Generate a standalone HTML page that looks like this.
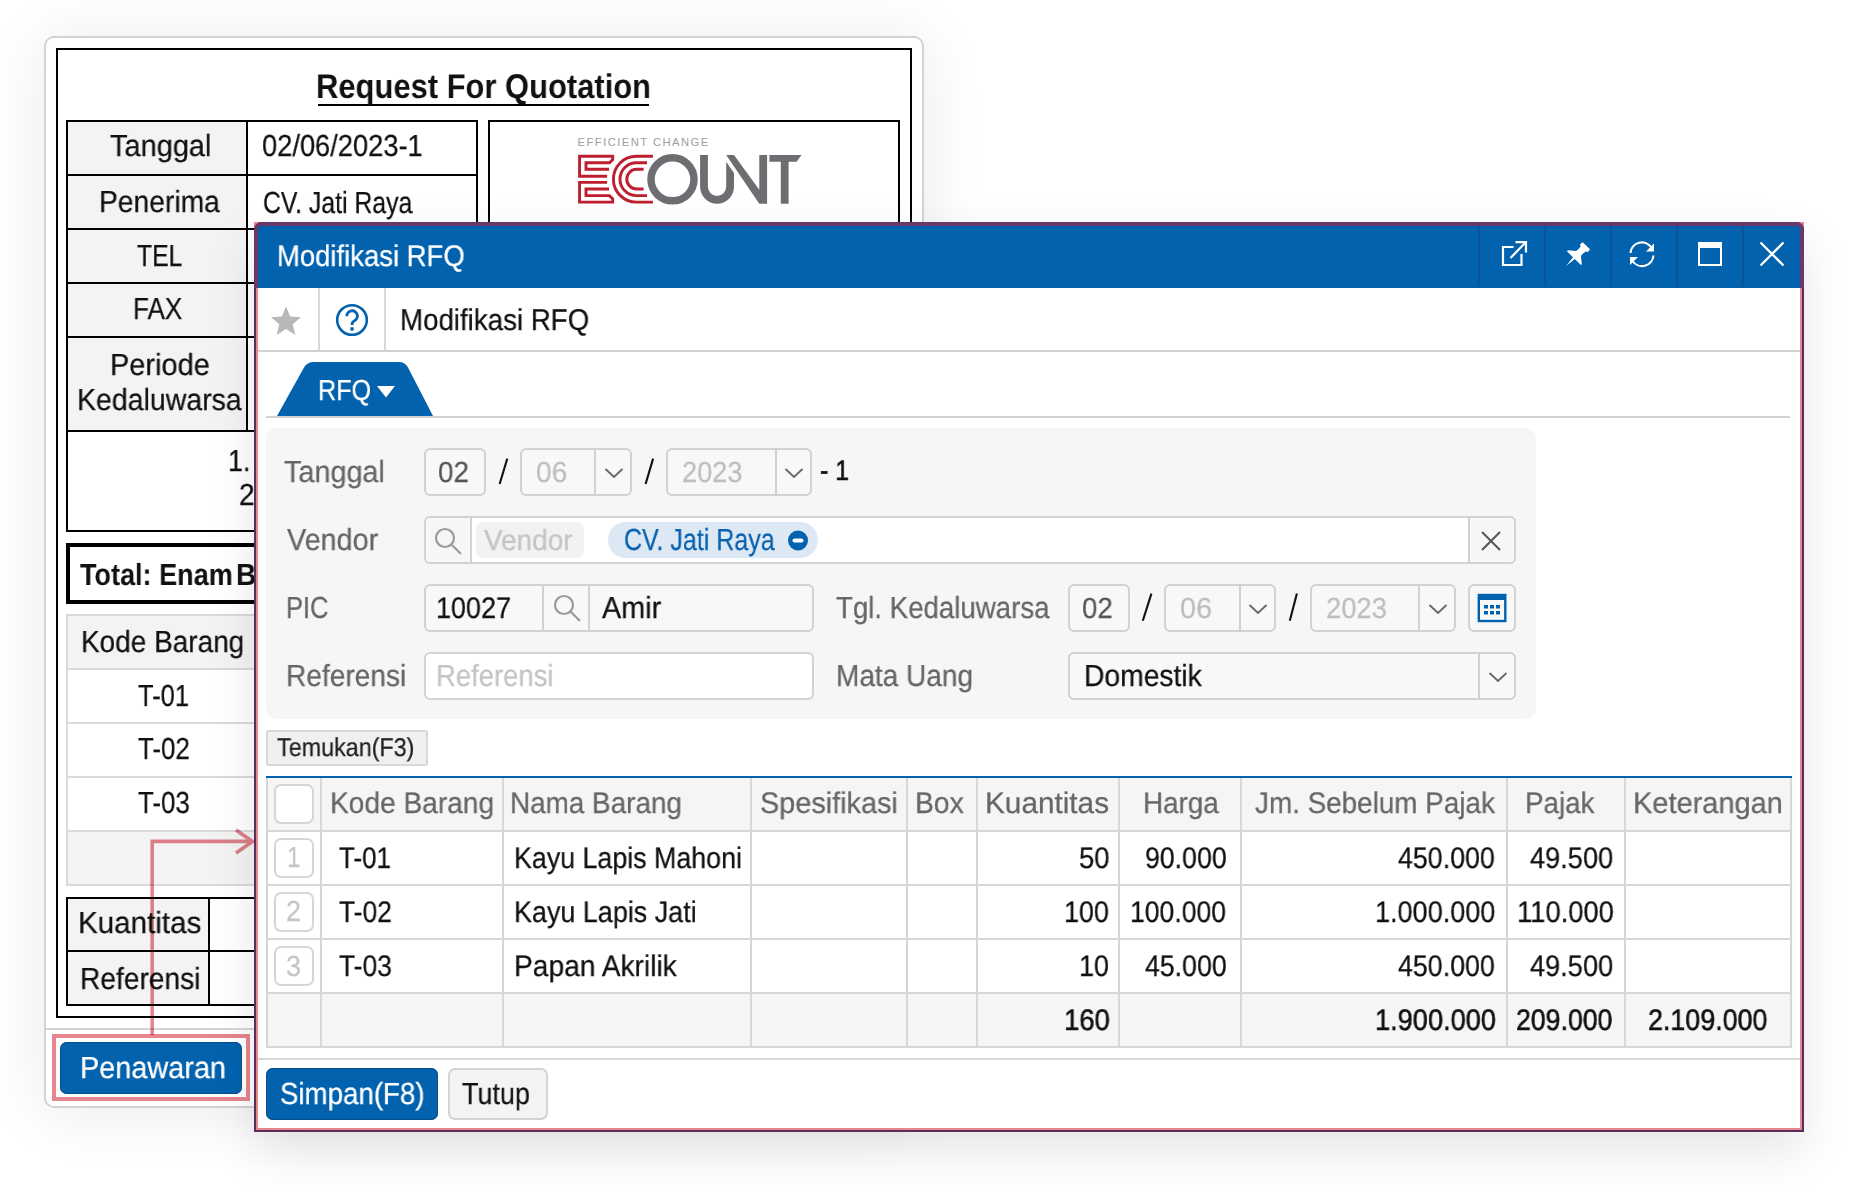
<!DOCTYPE html>
<html><head><meta charset="utf-8">
<style>
*{box-sizing:border-box;margin:0;padding:0}
html,body{width:1854px;height:1190px;overflow:hidden;background:#fff;font-family:"Liberation Sans",sans-serif;position:relative}
.a{position:absolute}
.t{position:absolute;white-space:nowrap;line-height:1;transform-origin:0 0;text-rendering:geometricPrecision;will-change:transform}
</style></head><body>
<div class="a" style="left:44px;top:36px;width:880px;height:1072px;border:2px solid #d3d3d3;border-radius:10px;background:#fff;box-shadow:0 4px 64px rgba(0,0,0,0.085)"></div>
<div class="a" style="left:46px;top:1028px;width:876px;height:2px;background:#d5d5d5"></div>
<div class="a" style="left:56px;top:48px;width:856px;height:970px;border:2px solid #000"></div>
<div class="a" style="left:318px;top:104px;width:331px;height:2px;background:#000"></div>
<div class="a" style="left:68px;top:122px;width:178px;height:308px;background:#f3f3f3"></div>
<div class="a" style="left:66px;top:120px;width:412px;height:312px;border:2px solid #000"></div>
<div class="a" style="left:246px;top:120px;width:2px;height:312px;background:#000"></div>
<div class="a" style="left:66px;top:174px;width:412px;height:2px;background:#000"></div>
<div class="a" style="left:66px;top:228px;width:412px;height:2px;background:#000"></div>
<div class="a" style="left:66px;top:282px;width:412px;height:2px;background:#000"></div>
<div class="a" style="left:66px;top:336px;width:412px;height:2px;background:#000"></div>
<div class="a" style="left:488px;top:120px;width:412px;height:312px;border:2px solid #000"></div>
<div class="a" style="left:66px;top:430px;width:834px;height:102px;border:2px solid #000"></div>
<div class="a" style="left:66px;top:543px;width:834px;height:61px;border:4px solid #000"></div>
<div class="a" style="left:68px;top:616px;width:830px;height:52px;background:#f3f3f3"></div>
<div class="a" style="left:68px;top:832px;width:830px;height:52px;background:#f3f3f3"></div>
<div class="a" style="left:66px;top:614px;width:834px;height:272px;border:2px solid #dadada"></div>
<div class="a" style="left:66px;top:668px;width:834px;height:2px;background:#dadada"></div>
<div class="a" style="left:66px;top:722px;width:834px;height:2px;background:#dadada"></div>
<div class="a" style="left:66px;top:776px;width:834px;height:2px;background:#dadada"></div>
<div class="a" style="left:66px;top:830px;width:834px;height:2px;background:#dadada"></div>
<div class="a" style="left:68px;top:899px;width:140px;height:105px;background:#f3f3f3"></div>
<div class="a" style="left:66px;top:897px;width:834px;height:109px;border:2px solid #000"></div>
<div class="a" style="left:208px;top:897px;width:2px;height:109px;background:#000"></div>
<div class="a" style="left:66px;top:950px;width:834px;height:2px;background:#000"></div>
<div class="a" style="left:52px;top:1034px;width:198px;height:67px;border:4px solid #e5858e"></div>
<div class="a" style="left:60px;top:1042px;width:182px;height:52px;background:#0262ae;border-radius:7px;box-shadow:inset 0 0 0 1px #0a4f8c"></div>
<svg class="a" style="left:560px;top:125px" width="260" height="90" viewBox="0 0 260 90">
<text x="17.6" y="21" font-family="Liberation Sans" font-size="11.2" fill="#9d9d9d" textLength="130.6" lengthAdjust="spacing">EFFICIENT CHANGE</text>
<g fill="none" stroke="#be1e2d" stroke-width="2.9" stroke-linejoin="miter">
<path d="M47.1 51.3 H19.55 V31.3 H52.7 V34.6 L49.5 37.7 H26 V44.3 H49"/>
<path d="M47.1 57.4 H19.55 V77.1 H52.7 V73.8 L49.5 70.6 H26 V64 H49"/>
<path d="M92.9 31.3 H76.3 A22.9 22.9 0 0 0 76.3 77.1 H92.9"/>
<path d="M87 37.7 H76.45 A16.45 16.45 0 0 0 76.45 70.6 H87"/>
<path d="M83.6 44.3 H76.65 A9.85 9.85 0 0 0 76.65 64 H83.6"/>
</g>
<circle cx="112.5" cy="54.35" r="21.5" fill="none" stroke="#6d6e71" stroke-width="7.5"/>
<path d="M140.1 29.9 H147.9 V61.85 A9.15 9.15 0 0 0 166.2 61.85 V36.8 L174 48 V61.85 A16.95 16.95 0 0 1 140.1 61.85 Z" fill="#6d6e71"/>
<path d="M166.2 29.9 H174 L199.3 64.7 V29.9 H207.1 V78.8 H199.3 Z" fill="#6d6e71"/>
<path d="M209.4 29.9 H241.5 L236.5 36.8 H228.6 V78.8 H220.8 V36.8 H209.4 Z" fill="#6d6e71"/>
</svg>
<div class="t" id="title" style="left:315.8px;top:70.0px;font-size:34.25px;font-weight:700;color:#111;transform:scaleX(0.9030);">Request For Quotation</div>
<div class="t" id="d_tg" style="left:109.8px;top:131.0px;font-size:30.5px;font-weight:400;color:#111;transform:scaleX(0.9490);-webkit-text-stroke:0.25px #111;">Tanggal</div>
<div class="t" id="d_tgv" style="left:262.1px;top:131.0px;font-size:30.5px;font-weight:400;color:#111;transform:scaleX(0.8938);-webkit-text-stroke:0.25px #111;">02/06/2023-1</div>
<div class="t" id="d_pen" style="left:98.6px;top:187.0px;font-size:30.5px;font-weight:400;color:#111;transform:scaleX(0.9256);-webkit-text-stroke:0.25px #111;">Penerima</div>
<div class="t" id="d_penv" style="left:262.8px;top:188.0px;font-size:30.5px;font-weight:400;color:#111;transform:scaleX(0.8126);-webkit-text-stroke:0.25px #111;">CV. Jati Raya</div>
<div class="t" id="d_tel" style="left:137.0px;top:241.0px;font-size:30.5px;font-weight:400;color:#111;transform:scaleX(0.8093);-webkit-text-stroke:0.25px #111;">TEL</div>
<div class="t" id="d_fax" style="left:133.3px;top:294.0px;font-size:30.5px;font-weight:400;color:#111;transform:scaleX(0.8545);-webkit-text-stroke:0.25px #111;">FAX</div>
<div class="t" id="d_per" style="left:110.1px;top:350.0px;font-size:30.5px;font-weight:400;color:#111;transform:scaleX(0.9490);-webkit-text-stroke:0.25px #111;">Periode</div>
<div class="t" id="d_ked" style="left:77.1px;top:385.0px;font-size:30.5px;font-weight:400;color:#111;transform:scaleX(0.9345);-webkit-text-stroke:0.25px #111;">Kedaluwarsa</div>
<div class="t" id="d_r1" style="left:227.7px;top:446.0px;font-size:30.5px;font-weight:400;color:#111;transform:scaleX(0.8810);-webkit-text-stroke:0.25px #111;">1.</div>
<div class="t" id="d_r2" style="left:239.1px;top:480.0px;font-size:30.5px;font-weight:400;color:#111;transform:scaleX(0.9200);-webkit-text-stroke:0.25px #111;">2.</div>
<div class="t" id="d_tot" style="left:79.8px;top:560.0px;font-size:30.5px;font-weight:700;color:#111;transform:scaleX(0.8865);">Total: Enam</div>
<div class="t" id="d_tot2" style="left:235.8px;top:560.0px;font-size:30.5px;font-weight:700;color:#111;transform:scaleX(0.9200);">Belas</div>
<div class="t" id="d_kb" style="left:80.7px;top:627.0px;font-size:30.5px;font-weight:400;color:#111;transform:scaleX(0.9167);-webkit-text-stroke:0.25px #111;">Kode Barang</div>
<div class="t" id="d_t1" style="left:138.2px;top:681.0px;font-size:30.5px;font-weight:400;color:#111;transform:scaleX(0.8373);-webkit-text-stroke:0.25px #111;">T-01</div>
<div class="t" id="d_t2" style="left:138.1px;top:734.0px;font-size:30.5px;font-weight:400;color:#111;transform:scaleX(0.8508);-webkit-text-stroke:0.25px #111;">T-02</div>
<div class="t" id="d_t3" style="left:138.1px;top:788.0px;font-size:30.5px;font-weight:400;color:#111;transform:scaleX(0.8508);-webkit-text-stroke:0.25px #111;">T-03</div>
<div class="t" id="d_kua" style="left:77.9px;top:908.0px;font-size:30.5px;font-weight:400;color:#111;transform:scaleX(0.9694);-webkit-text-stroke:0.25px #111;">Kuantitas</div>
<div class="t" id="d_ref" style="left:79.8px;top:964.0px;font-size:30.5px;font-weight:400;color:#111;transform:scaleX(0.9228);-webkit-text-stroke:0.25px #111;">Referensi</div>
<div class="t" id="d_pwr" style="left:79.7px;top:1053.0px;font-size:30.5px;font-weight:400;color:#fff;transform:scaleX(0.9460);-webkit-text-stroke:0.25px #fff;">Penawaran</div>
<svg class="a" style="left:0;top:0;mix-blend-mode:multiply" width="300" height="1100"><path d="M152.2 1035 V841.4 H252" fill="none" stroke="#e5858e" stroke-width="3.6"/><polyline points="236,830 252.5,841.4 236,853" fill="none" stroke="#e5858e" stroke-width="3.6"/></svg>
<div class="a" style="left:254px;top:222px;width:1550px;height:910px;background:#e8868e;box-shadow:0 20px 46px rgba(0,0,0,0.10)"></div>
<div class="a" style="left:254px;top:222px;width:1550px;height:910px;border:2px solid #5a2d5e;border-radius:8px 8px 0 0;background:#fff;box-shadow:inset 0 0 0 2px #e8868e"></div>
<div class="a" style="left:254px;top:222px;width:1550px;height:66px;border:4px solid #683868;border-bottom:0;border-radius:8px 8px 0 0;background:#0262ae"></div>
<div class="a" style="left:1478px;top:226px;width:2px;height:60px;background:#0a5394"></div>
<div class="a" style="left:1544px;top:226px;width:2px;height:60px;background:#0a5394"></div>
<div class="a" style="left:1610px;top:226px;width:2px;height:60px;background:#0a5394"></div>
<div class="a" style="left:1676px;top:226px;width:2px;height:60px;background:#0a5394"></div>
<div class="a" style="left:1742px;top:226px;width:2px;height:60px;background:#0a5394"></div>
<svg class="a" style="left:1495px;top:235px" width="40" height="40" viewBox="0 0 40 40" fill="none" stroke="#fff" stroke-width="2.2">
<path d="M18.5 12 H8 V30 H26.5 V19"/><path d="M15.5 23 L30.5 7.5"/><path d="M20.5 7.2 H31 V17.5"/></svg>
<svg class="a" style="left:1560px;top:235px" width="40" height="40" viewBox="0 0 40 40">
<g transform="translate(26.35 10.75) rotate(45)" fill="#fff"><path d="M-5.4,1 Q-5.4,0 -4.4,0 H4.4 Q5.4,0 5.4,1 V3.2 Q5.4,4.2 4.4,4.2 H3.6 Q3,8 3.4,11 L9.8,16.2 V17.6 H1.3 L0,28.8 L-1.3,17.6 H-9.8 V16.2 L-3.4,11 Q-3,8 -3.6,4.2 H-4.4 Q-5.4,4.2 -5.4,3.2 Z"/></g></svg>
<svg class="a" style="left:1622px;top:234px" width="40" height="40" viewBox="0 0 40 40" fill="none" stroke="#fff" stroke-width="2.2">
<path d="M8.5 19 A11.5 11.5 0 0 1 29.5 13.5"/><path d="M31.5 21.5 A11.5 11.5 0 0 1 10.5 27"/>
<path d="M32 9.5 V17.5 H24 Z" fill="#fff" stroke="none"/><path d="M8 31 V23 H16 Z" fill="#fff" stroke="none"/></svg>
<div class="a" style="left:1698px;top:242px;width:24px;height:24px;border:2px solid #fff;border-top:6px solid #fff"></div>
<svg class="a" style="left:1752px;top:234px" width="40" height="40" viewBox="0 0 40 40" stroke="#fff" stroke-width="2.3">
<path d="M8.5 8.5 L31.5 31.5 M31.5 8.5 L8.5 31.5"/></svg>
<div class="a" style="left:258px;top:350px;width:1542px;height:2px;background:#d2d2d2"></div>
<div class="a" style="left:318px;top:288px;width:2px;height:62px;background:#d8d8d8"></div>
<div class="a" style="left:384px;top:288px;width:2px;height:62px;background:#d8d8d8"></div>
<svg class="a" style="left:266px;top:301px" width="40" height="40" viewBox="0 0 40 40">
<path d="M20 5.5 L24.2 15.6 L35 16.3 L26.7 23.2 L29.4 34 L20 28 L10.6 34 L13.3 23.2 L5 16.3 L15.8 15.6 Z" fill="#b8b8b8"/></svg>
<svg class="a" style="left:332px;top:300px" width="40" height="40" viewBox="0 0 40 40">
<circle cx="20" cy="20" r="14.8" fill="none" stroke="#0262ae" stroke-width="2.6"/>
<path d="M14.8 16.2 A5.3 5.3 0 1 1 22 21 C20.3 22 20 22.8 20 25" fill="none" stroke="#0262ae" stroke-width="2.8"/>
<rect x="18.4" y="27.3" width="3.3" height="3.3" fill="#0262ae"/></svg>
<div class="a" style="left:266px;top:416px;width:1524px;height:2px;background:#d2d2d2"></div>
<svg class="a" style="left:270px;top:358px" width="170" height="60" viewBox="0 0 170 60">
<path d="M7 58 L34 9.5 Q37 4 44 4 L129 4 Q135 4 138 9.5 L163 58 Z" fill="#0262ae"/>
<path d="M107 28 H125 L116 39.5 Z" fill="#fff"/></svg>
<div class="a" style="left:266px;top:428px;width:1270px;height:291px;background:#f6f6f6;border-radius:10px"></div>
<div class="a" style="left:424px;top:448px;width:62px;height:48px;border:2px solid #d2d2d2;border-radius:6px;background:#f8f8f8"></div>
<div class="a" style="left:520px;top:448px;width:112px;height:48px;border:2px solid #d2d2d2;border-radius:6px;background:#f8f8f8"></div><div class="a" style="left:594px;top:448px;width:2px;height:48px;background:#d2d2d2"></div><svg class="a" style="left:603px;top:466px" width="22" height="14" viewBox="0 0 22 14"><path d="M2.5 3 L11 11 L19.5 3" fill="none" stroke="#666" stroke-width="1.8"/></svg>
<div class="a" style="left:666px;top:448px;width:146px;height:48px;border:2px solid #d2d2d2;border-radius:6px;background:#f8f8f8"></div><div class="a" style="left:775px;top:448px;width:2px;height:48px;background:#d2d2d2"></div><svg class="a" style="left:783px;top:466px" width="22" height="14" viewBox="0 0 22 14"><path d="M2.5 3 L11 11 L19.5 3" fill="none" stroke="#666" stroke-width="1.8"/></svg>
<div class="a" style="left:424px;top:516px;width:1092px;height:48px;border:2px solid #d2d2d2;border-radius:6px;background:#fff"></div>
<div class="a" style="left:426px;top:518px;width:45px;height:44px;background:#f6f6f6;border-radius:4px 0 0 4px"></div>
<div class="a" style="left:470px;top:516px;width:2px;height:48px;background:#d2d2d2"></div>
<div class="a" style="left:1470px;top:518px;width:44px;height:44px;background:#f6f6f6;border-radius:0 4px 4px 0"></div>
<div class="a" style="left:1468px;top:516px;width:2px;height:48px;background:#d2d2d2"></div>
<div class="a" style="left:476px;top:522px;width:108px;height:36px;background:#f2f2f2;border-radius:7px"></div>
<div class="a" style="left:608px;top:522px;width:210px;height:36px;background:#dce8f4;border-radius:18px"></div>
<svg class="a" style="left:786px;top:529px" width="24" height="24" viewBox="0 0 24 24"><circle cx="12" cy="11.5" r="10" fill="#0262ae"/><rect x="6.5" y="9.6" width="11" height="4" rx="2" fill="#fff"/></svg>
<svg class="a" style="left:432px;top:525px" width="32" height="32" viewBox="0 0 32 32" fill="none" stroke="#9b9b9b" stroke-width="2.2"><circle cx="13" cy="13" r="9"/><path d="M19.5 19.5 L29 29"/></svg>
<svg class="a" style="left:1478px;top:528px" width="26" height="26" viewBox="0 0 26 26" stroke="#555" stroke-width="2"><path d="M4 4 L22 22 M22 4 L4 22"/></svg>
<div class="a" style="left:424px;top:584px;width:390px;height:48px;border:2px solid #d2d2d2;border-radius:6px;background:#f8f8f8"></div>
<div class="a" style="left:542px;top:584px;width:2px;height:48px;background:#d2d2d2"></div>
<div class="a" style="left:588px;top:584px;width:2px;height:48px;background:#d2d2d2"></div>
<svg class="a" style="left:551px;top:592px" width="32" height="32" viewBox="0 0 32 32" fill="none" stroke="#9b9b9b" stroke-width="2.2"><circle cx="13" cy="13" r="9"/><path d="M19.5 19.5 L29 29"/></svg>
<div class="a" style="left:1068px;top:584px;width:62px;height:48px;border:2px solid #d2d2d2;border-radius:6px;background:#f8f8f8"></div>
<div class="a" style="left:1164px;top:584px;width:112px;height:48px;border:2px solid #d2d2d2;border-radius:6px;background:#f8f8f8"></div><div class="a" style="left:1239px;top:584px;width:2px;height:48px;background:#d2d2d2"></div><svg class="a" style="left:1247px;top:602px" width="22" height="14" viewBox="0 0 22 14"><path d="M2.5 3 L11 11 L19.5 3" fill="none" stroke="#666" stroke-width="1.8"/></svg>
<div class="a" style="left:1310px;top:584px;width:146px;height:48px;border:2px solid #d2d2d2;border-radius:6px;background:#f8f8f8"></div><div class="a" style="left:1418px;top:584px;width:2px;height:48px;background:#d2d2d2"></div><svg class="a" style="left:1427px;top:602px" width="22" height="14" viewBox="0 0 22 14"><path d="M2.5 3 L11 11 L19.5 3" fill="none" stroke="#666" stroke-width="1.8"/></svg>
<div class="a" style="left:1468px;top:584px;width:48px;height:48px;border:2px solid #d2d2d2;border-radius:6px;background:#f8f8f8"></div>
<svg class="a" style="left:1476px;top:592px" width="32" height="32" viewBox="0 0 32 32">
<rect x="2.8" y="3" width="26.5" height="26" fill="none" stroke="#0262ae" stroke-width="2.4"/><rect x="2" y="2" width="28" height="6" fill="#0262ae"/>
<g fill="#0262ae"><rect x="8" y="13" width="4" height="3.5"/><rect x="14" y="13" width="4" height="3.5"/><rect x="20" y="13" width="4" height="3.5"/>
<rect x="8" y="19" width="4" height="3.5"/><rect x="14" y="19" width="4" height="3.5"/><rect x="20" y="19" width="4" height="3.5"/></g></svg>
<svg class="a" style="left:0;top:0" width="1854" height="1190"><path d="M507.3 458.6 L499.6 484" stroke="#111" stroke-width="2.1" stroke-linecap="butt"/></svg>
<svg class="a" style="left:0;top:0" width="1854" height="1190"><path d="M653.1 458.6 L645.6 484" stroke="#111" stroke-width="2.1" stroke-linecap="butt"/></svg>
<svg class="a" style="left:0;top:0" width="1854" height="1190"><path d="M1151.4 593.6 L1142.8 620.8" stroke="#111" stroke-width="2.1" stroke-linecap="butt"/></svg>
<svg class="a" style="left:0;top:0" width="1854" height="1190"><path d="M1296.9 593.6 L1289.8 620.8" stroke="#111" stroke-width="2.1" stroke-linecap="butt"/></svg>
<div class="a" style="left:424px;top:652px;width:390px;height:48px;border:2px solid #d2d2d2;border-radius:6px;background:#fff"></div>
<div class="a" style="left:1068px;top:652px;width:448px;height:48px;border:2px solid #d2d2d2;border-radius:6px;background:#f8f8f8"></div><div class="a" style="left:1478px;top:652px;width:2px;height:48px;background:#d2d2d2"></div><svg class="a" style="left:1487px;top:670px" width="22" height="14" viewBox="0 0 22 14"><path d="M2.5 3 L11 11 L19.5 3" fill="none" stroke="#666" stroke-width="1.8"/></svg>
<div class="a" style="left:266px;top:730px;width:162px;height:36px;background:#f0f0f0;border:2px solid #d8d8d8;border-radius:2px"></div>
<div class="a" style="left:266px;top:778px;width:1526px;height:52px;background:#f5f5f5"></div>
<div class="a" style="left:266px;top:992px;width:1526px;height:56px;background:#f5f5f5"></div>
<div class="a" style="left:266px;top:776px;width:1526px;height:2px;background:#0262ae"></div>
<div class="a" style="left:266px;top:830px;width:1526px;height:2px;background:#d6d6d6"></div>
<div class="a" style="left:266px;top:884px;width:1526px;height:2px;background:#d6d6d6"></div>
<div class="a" style="left:266px;top:938px;width:1526px;height:2px;background:#d6d6d6"></div>
<div class="a" style="left:266px;top:992px;width:1526px;height:2px;background:#d6d6d6"></div>
<div class="a" style="left:266px;top:1046px;width:1526px;height:2px;background:#d6d6d6"></div>
<div class="a" style="left:266px;top:778px;width:2px;height:270px;background:#d6d6d6"></div>
<div class="a" style="left:320px;top:778px;width:2px;height:270px;background:#d6d6d6"></div>
<div class="a" style="left:502px;top:778px;width:2px;height:270px;background:#d6d6d6"></div>
<div class="a" style="left:750px;top:778px;width:2px;height:270px;background:#d6d6d6"></div>
<div class="a" style="left:906px;top:778px;width:2px;height:270px;background:#d6d6d6"></div>
<div class="a" style="left:976px;top:778px;width:2px;height:270px;background:#d6d6d6"></div>
<div class="a" style="left:1118px;top:778px;width:2px;height:270px;background:#d6d6d6"></div>
<div class="a" style="left:1240px;top:778px;width:2px;height:270px;background:#d6d6d6"></div>
<div class="a" style="left:1506px;top:778px;width:2px;height:270px;background:#d6d6d6"></div>
<div class="a" style="left:1624px;top:778px;width:2px;height:270px;background:#d6d6d6"></div>
<div class="a" style="left:1790px;top:778px;width:2px;height:270px;background:#d6d6d6"></div>
<div class="a" style="left:274px;top:784px;width:40px;height:40px;border:2px solid #d6d6d6;border-radius:7px;background:#fff"></div>
<div class="a" style="left:274px;top:838px;width:40px;height:40px;border:2px solid #d6d6d6;border-radius:7px;background:#fff"></div>
<div class="a" style="left:274px;top:892px;width:40px;height:40px;border:2px solid #d6d6d6;border-radius:7px;background:#fff"></div>
<div class="a" style="left:274px;top:946px;width:40px;height:40px;border:2px solid #d6d6d6;border-radius:7px;background:#fff"></div>
<div class="a" style="left:258px;top:1058px;width:1542px;height:2px;background:#d8d8d8"></div>
<div class="a" style="left:266px;top:1068px;width:172px;height:52px;background:#0262ae;border-radius:7px;box-shadow:inset 0 0 0 1px #0a4f8c"></div>
<div class="a" style="left:448px;top:1068px;width:100px;height:52px;background:#f3f3f3;border:2px solid #d3d3d3;border-radius:7px"></div>
<div class="t" id="m_hdr" style="left:276.6px;top:242.0px;font-size:29.75px;font-weight:400;color:#fff;transform:scaleX(0.9230);-webkit-text-stroke:0.25px #fff;">Modifikasi RFQ</div>
<div class="t" id="m_tb" style="left:400.2px;top:306.0px;font-size:30.0px;font-weight:400;color:#111;transform:scaleX(0.9228);-webkit-text-stroke:0.25px #111;">Modifikasi RFQ</div>
<div class="t" id="m_tab" style="left:317.8px;top:377.0px;font-size:29.0px;font-weight:400;color:#fff;transform:scaleX(0.8655);-webkit-text-stroke:0.25px #fff;">RFQ</div>
<div class="t" id="f_tg" style="left:284.0px;top:457.0px;font-size:30.5px;font-weight:400;color:#666;transform:scaleX(0.9442);-webkit-text-stroke:0.25px #666;">Tanggal</div>
<div class="t" id="f_02" style="left:438.0px;top:459.0px;font-size:29.0px;font-weight:400;color:#555;transform:scaleX(0.9567);-webkit-text-stroke:0.25px #555;">02</div>
<div class="t" id="f_06" style="left:535.8px;top:459.0px;font-size:29.0px;font-weight:400;color:#bdbdbd;transform:scaleX(0.9667);-webkit-text-stroke:0.25px #bdbdbd;">06</div>
<div class="t" id="f_2023" style="left:682.1px;top:459.0px;font-size:29.0px;font-weight:400;color:#bdbdbd;transform:scaleX(0.9349);-webkit-text-stroke:0.25px #bdbdbd;">2023</div>
<div class="t" id="f_n1" style="left:820.3px;top:456.0px;font-size:28.25px;font-weight:400;color:#111;transform:scaleX(0.8806);-webkit-text-stroke:0.6px #111;">- 1</div>
<div class="t" id="f_ven" style="left:286.6px;top:525.0px;font-size:30.5px;font-weight:400;color:#666;transform:scaleX(0.9437);-webkit-text-stroke:0.25px #666;">Vendor</div>
<div class="t" id="f_venph" style="left:484.4px;top:527.0px;font-size:29.0px;font-weight:400;color:#c4c4c4;transform:scaleX(0.9630);-webkit-text-stroke:0.25px #c4c4c4;">Vendor</div>
<div class="t" id="f_cv" style="left:624.1px;top:525.0px;font-size:30.5px;font-weight:400;color:#0a62ae;transform:scaleX(0.8202);-webkit-text-stroke:0.25px #0a62ae;">CV. Jati Raya</div>
<div class="t" id="f_pic" style="left:285.9px;top:593.0px;font-size:30.5px;font-weight:400;color:#666;transform:scaleX(0.8362);-webkit-text-stroke:0.25px #666;">PIC</div>
<div class="t" id="f_10027" style="left:435.5px;top:594.0px;font-size:29.75px;font-weight:400;color:#111;transform:scaleX(0.9062);-webkit-text-stroke:0.25px #111;">10027</div>
<div class="t" id="f_amir" style="left:602.4px;top:593.0px;font-size:30.5px;font-weight:400;color:#111;transform:scaleX(0.9452);-webkit-text-stroke:0.25px #111;">Amir</div>
<div class="t" id="f_tgl" style="left:836.2px;top:593.0px;font-size:30.5px;font-weight:400;color:#666;transform:scaleX(0.9060);-webkit-text-stroke:0.25px #666;">Tgl. Kedaluwarsa</div>
<div class="t" id="f_02b" style="left:1082.0px;top:595.0px;font-size:29.0px;font-weight:400;color:#555;transform:scaleX(0.9500);-webkit-text-stroke:0.25px #555;">02</div>
<div class="t" id="f_06b" style="left:1179.8px;top:595.0px;font-size:29.0px;font-weight:400;color:#bdbdbd;transform:scaleX(0.9900);-webkit-text-stroke:0.25px #bdbdbd;">06</div>
<div class="t" id="f_2023b" style="left:1325.5px;top:595.0px;font-size:29.0px;font-weight:400;color:#bdbdbd;transform:scaleX(0.9429);-webkit-text-stroke:0.25px #bdbdbd;">2023</div>
<div class="t" id="f_ref" style="left:286.2px;top:661.0px;font-size:30.5px;font-weight:400;color:#666;transform:scaleX(0.9213);-webkit-text-stroke:0.25px #666;">Referensi</div>
<div class="t" id="f_refph" style="left:436.2px;top:661.0px;font-size:30.5px;font-weight:400;color:#c4c4c4;transform:scaleX(0.9000);-webkit-text-stroke:0.25px #c4c4c4;">Referensi</div>
<div class="t" id="f_mu" style="left:836.2px;top:661.0px;font-size:30.5px;font-weight:400;color:#666;transform:scaleX(0.9186);-webkit-text-stroke:0.25px #666;">Mata Uang</div>
<div class="t" id="f_dom" style="left:1084.0px;top:661.0px;font-size:30.5px;font-weight:400;color:#111;transform:scaleX(0.9272);-webkit-text-stroke:0.25px #111;">Domestik</div>
<div class="t" id="temukan" style="left:277.0px;top:736.0px;font-size:25.75px;font-weight:400;color:#222;transform:scaleX(0.9060);-webkit-text-stroke:0.25px #222;">Temukan(F3)</div>
<div class="t" id="g_h1" style="left:329.5px;top:789.0px;font-size:29.75px;font-weight:400;color:#666;transform:scaleX(0.9447);-webkit-text-stroke:0.25px #666;">Kode Barang</div>
<div class="t" id="g_h2" style="left:509.5px;top:789.0px;font-size:29.75px;font-weight:400;color:#666;transform:scaleX(0.9367);-webkit-text-stroke:0.25px #666;">Nama Barang</div>
<div class="t" id="g_h3" style="left:760.0px;top:789.0px;font-size:29.75px;font-weight:400;color:#666;transform:scaleX(0.9691);-webkit-text-stroke:0.25px #666;">Spesifikasi</div>
<div class="t" id="g_h4" style="left:915.4px;top:789.0px;font-size:29.75px;font-weight:400;color:#666;transform:scaleX(0.9490);-webkit-text-stroke:0.25px #666;">Box</div>
<div class="t" id="g_h5" style="left:984.8px;top:789.0px;font-size:29.75px;font-weight:400;color:#666;-webkit-text-stroke:0.25px #666;">Kuantitas</div>
<div class="t" id="g_h6" style="left:1143.4px;top:789.0px;font-size:29.75px;font-weight:400;color:#666;transform:scaleX(0.9342);-webkit-text-stroke:0.25px #666;">Harga</div>
<div class="t" id="g_h7" style="left:1254.7px;top:789.0px;font-size:29.75px;font-weight:400;color:#666;transform:scaleX(0.9361);-webkit-text-stroke:0.25px #666;">Jm. Sebelum Pajak</div>
<div class="t" id="g_h8" style="left:1525.3px;top:789.0px;font-size:29.75px;font-weight:400;color:#666;transform:scaleX(0.9333);-webkit-text-stroke:0.25px #666;">Pajak</div>
<div class="t" id="g_h9" style="left:1633.1px;top:789.0px;font-size:29.75px;font-weight:400;color:#666;transform:scaleX(0.9740);-webkit-text-stroke:0.25px #666;">Keterangan</div>
<div class="t" id="r1n" style="left:286.9px;top:844.0px;font-size:29.0px;font-weight:400;color:#c4c4c4;transform:scaleX(0.8308);-webkit-text-stroke:0.25px #c4c4c4;">1</div>
<div class="t" id="r2n" style="left:286.1px;top:898.0px;font-size:29.0px;font-weight:400;color:#c4c4c4;transform:scaleX(0.9286);-webkit-text-stroke:0.25px #c4c4c4;">2</div>
<div class="t" id="r3n" style="left:286.1px;top:953.0px;font-size:29.0px;font-weight:400;color:#c4c4c4;transform:scaleX(0.9286);-webkit-text-stroke:0.25px #c4c4c4;">3</div>
<div class="t" id="r1a" style="left:338.5px;top:844.0px;font-size:29.75px;font-weight:400;color:#111;transform:scaleX(0.8719);-webkit-text-stroke:0.25px #111;">T-01</div>
<div class="t" id="r2a" style="left:338.5px;top:898.0px;font-size:29.75px;font-weight:400;color:#111;transform:scaleX(0.8877);-webkit-text-stroke:0.25px #111;">T-02</div>
<div class="t" id="r3a" style="left:338.5px;top:952.0px;font-size:29.75px;font-weight:400;color:#111;transform:scaleX(0.8877);-webkit-text-stroke:0.25px #111;">T-03</div>
<div class="t" id="r1b" style="left:513.9px;top:844.0px;font-size:29.75px;font-weight:400;color:#111;transform:scaleX(0.9008);-webkit-text-stroke:0.25px #111;">Kayu Lapis Mahoni</div>
<div class="t" id="r2b" style="left:513.9px;top:898.0px;font-size:29.75px;font-weight:400;color:#111;transform:scaleX(0.9051);-webkit-text-stroke:0.25px #111;">Kayu Lapis Jati</div>
<div class="t" id="r3b" style="left:513.8px;top:952.0px;font-size:29.75px;font-weight:400;color:#111;transform:scaleX(0.9465);-webkit-text-stroke:0.25px #111;">Papan Akrilik</div>
<div class="t" id="r1q" style="left:1078.5px;top:844.0px;font-size:29.75px;font-weight:400;color:#111;transform:scaleX(0.9226);-webkit-text-stroke:0.25px #111;">50</div>
<div class="t" id="r2q" style="left:1063.6px;top:898.0px;font-size:29.75px;font-weight:400;color:#111;transform:scaleX(0.9064);-webkit-text-stroke:0.25px #111;">100</div>
<div class="t" id="r3q" style="left:1079.0px;top:952.0px;font-size:29.75px;font-weight:400;color:#111;transform:scaleX(0.9067);-webkit-text-stroke:0.25px #111;">10</div>
<div class="t" id="r1h" style="left:1145.0px;top:844.0px;font-size:29.75px;font-weight:400;color:#111;transform:scaleX(0.8978);-webkit-text-stroke:0.25px #111;">90.000</div>
<div class="t" id="r2h" style="left:1130.3px;top:898.0px;font-size:29.75px;font-weight:400;color:#111;transform:scaleX(0.8924);-webkit-text-stroke:0.25px #111;">100.000</div>
<div class="t" id="r3h" style="left:1145.0px;top:952.0px;font-size:29.75px;font-weight:400;color:#111;transform:scaleX(0.8978);-webkit-text-stroke:0.25px #111;">45.000</div>
<div class="t" id="r1s" style="left:1398.0px;top:844.0px;font-size:29.75px;font-weight:400;color:#111;transform:scaleX(0.9000);-webkit-text-stroke:0.25px #111;">450.000</div>
<div class="t" id="r2s" style="left:1375.2px;top:898.0px;font-size:29.75px;font-weight:400;color:#111;transform:scaleX(0.9093);-webkit-text-stroke:0.25px #111;">1.000.000</div>
<div class="t" id="r3s" style="left:1398.0px;top:952.0px;font-size:29.75px;font-weight:400;color:#111;transform:scaleX(0.9000);-webkit-text-stroke:0.25px #111;">450.000</div>
<div class="t" id="r1p" style="left:1530.0px;top:844.0px;font-size:29.75px;font-weight:400;color:#111;transform:scaleX(0.9135);-webkit-text-stroke:0.25px #111;">49.500</div>
<div class="t" id="r2p" style="left:1516.6px;top:898.0px;font-size:29.75px;font-weight:400;color:#111;transform:scaleX(0.9196);-webkit-text-stroke:0.25px #111;">110.000</div>
<div class="t" id="r3p" style="left:1530.0px;top:952.0px;font-size:29.75px;font-weight:400;color:#111;transform:scaleX(0.9135);-webkit-text-stroke:0.25px #111;">49.500</div>
<div class="t" id="tq" style="left:1063.5px;top:1006.0px;font-size:29.75px;font-weight:400;color:#111;transform:scaleX(0.9255);-webkit-text-stroke:0.6px #111;">160</div>
<div class="t" id="ts" style="left:1374.6px;top:1006.0px;font-size:29.75px;font-weight:400;color:#111;transform:scaleX(0.9140);-webkit-text-stroke:0.6px #111;">1.900.000</div>
<div class="t" id="tp" style="left:1516.3px;top:1006.0px;font-size:29.75px;font-weight:400;color:#111;transform:scaleX(0.8962);-webkit-text-stroke:0.6px #111;">209.000</div>
<div class="t" id="tk" style="left:1648.2px;top:1006.0px;font-size:29.75px;font-weight:400;color:#111;transform:scaleX(0.9023);-webkit-text-stroke:0.6px #111;">2.109.000</div>
<div class="t" id="simpan" style="left:280.4px;top:1079.0px;font-size:30.5px;font-weight:400;color:#fff;transform:scaleX(0.9070);-webkit-text-stroke:0.25px #fff;">Simpan(F8)</div>
<div class="t" id="tutup" style="left:462.3px;top:1079.0px;font-size:30.5px;font-weight:400;color:#111;transform:scaleX(0.8827);-webkit-text-stroke:0.25px #111;">Tutup</div>
</body></html>
